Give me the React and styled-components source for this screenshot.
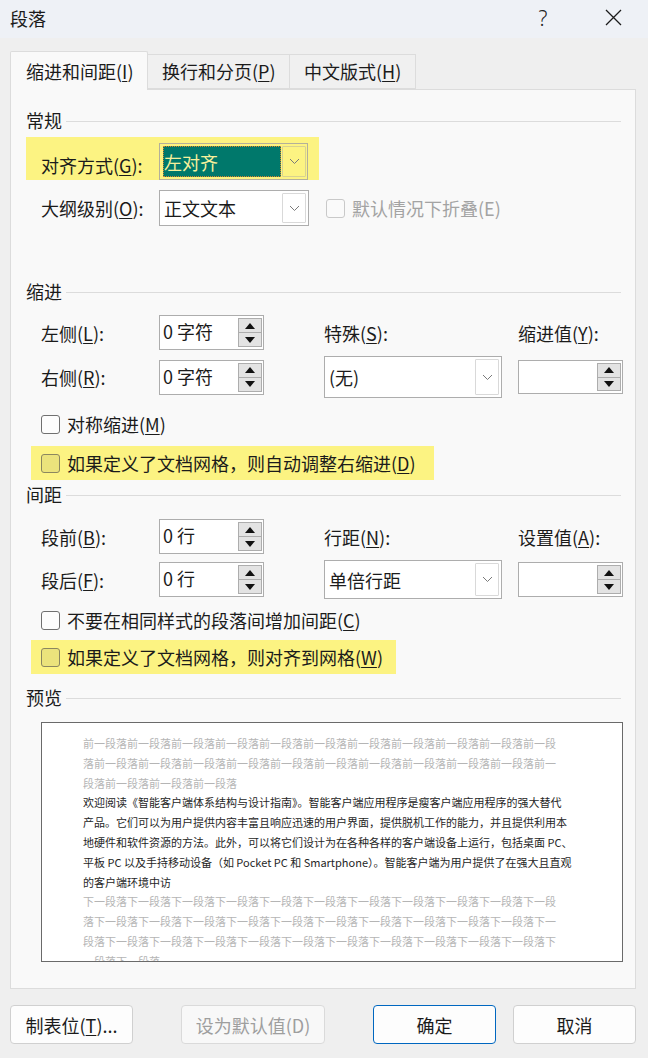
import React from 'react';
import styled, { createGlobalStyle, css } from 'styled-components';

const GlobalStyle = createGlobalStyle`
  html, body { margin: 0; padding: 0; }
  body {
    background: #efefef;
    font-family: "Noto Sans CJK SC", "Noto Sans", sans-serif;
    color: #1b1b1b;
  }
  * { box-sizing: border-box; }
  u { text-decoration-thickness: 1px; text-underline-offset: 2px; }
`;

const HL = '#fcf382';

const Window = styled.div`
  width: 648px;
  height: 1058px;
  background: #efefef;
  display: flex;
  flex-direction: column;
  overflow: hidden;
`;

const TitleBar = styled.div`
  height: 38px;
  background: #eef1f6;
  display: flex;
  align-items: center;
  padding: 0 12px 3px 10px;
  font-size: 18px;
  line-height: 24px;
`;

const TitleText = styled.div`
  flex: 1;
`;

const TitleButton = styled.div`
  width: 46px;
  height: 30px;
  display: flex;
  align-items: center;
  justify-content: center;
  font-family: "Noto Sans", sans-serif;
  font-weight: 300;
  font-size: 21px;
  color: #222;
  margin-left: ${p => p.$gap || 0}px;
`;

const TabRow = styled.div`
  display: flex;
  align-items: flex-end;
  margin-top: 13px;
  padding-left: 10px;
  position: relative;
  z-index: 2;
`;

const Tab = styled.div`
  width: ${p => p.$w}px;
  height: ${p => (p.$active ? 39 : 35)}px;
  margin-bottom: ${p => (p.$active ? -1 : 0)}px;
  background: ${p => (p.$active ? '#f9f9f9' : '#f0f0f0')};
  border: 1px solid #dcdcdc;
  border-bottom: ${p => (p.$active ? 'none' : '1px solid #dcdcdc')};
  border-left: ${p => (p.$first ? '1px solid #dcdcdc' : 'none')};
  border-radius: ${p => (p.$active ? '2px 2px 0 0' : '0')};
  font-size: 18px;
  line-height: 24px;
  display: flex;
  align-items: center;
  padding-left: ${p => (p.$active ? 15 : 14)}px;
  padding-bottom: ${p => (p.$active ? 0 : 1)}px;
  color: #1b1b1b;
`;

const Panel = styled.div`
  margin: 0 12px 0 10px;
  height: 900px;
  background: #f9f9f9;
  border: 1px solid #dcdcdc;
  display: flex;
  flex-direction: column;
  padding: 0 14px 0 15px;
`;

const SectionHeader = styled.div`
  display: flex;
  align-items: center;
  height: 24px;
  font-size: 18px;
  line-height: 24px;
  margin-top: ${p => p.$mt}px;
  &::after {
    content: '';
    flex: 1;
    height: 1px;
    background: #dcdcdc;
    margin-left: 4px;
    margin-top: 2px;
  }
`;

const Highlight = styled.div`
  align-self: flex-start;
  display: flex;
  align-items: ${p => p.$align || 'center'};
  background: ${HL};
  width: ${p => p.$w}px;
  height: ${p => p.$h}px;
  margin-top: ${p => p.$mt}px;
  margin-left: ${p => p.$ml || 0}px;
  padding: ${p => p.$pad};
`;

const FieldRow = styled.div`
  display: flex;
  align-items: center;
  margin-top: ${p => p.$mt}px;
  padding-left: 15px;
`;

const Label = styled.div`
  width: ${p => p.$w || 118}px;
  font-size: 18px;
  line-height: 24px;
  white-space: nowrap;
  color: ${p => (p.$disabled ? '#a3a3a3' : '#1b1b1b')};
`;

const HighlightLabel = styled(Label)`
  align-self: center;
  margin-top: 6px;
`;

const SelectBox = styled.div`
  width: ${p => p.$w}px;
  height: ${p => p.$h}px;
  border: 1px solid ${p => (p.$tinted ? '#b3b09a' : '#adadad')};
  background: ${p => (p.$tinted ? HL : '#ffffff')};
  display: flex;
  align-items: stretch;
  padding: 2px 1px 2px 3px;
`;

const SelectValue = styled.div`
  flex: 1;
  display: flex;
  align-items: center;
  font-size: 18px;
  line-height: 24px;
  padding-left: 1px;
  white-space: nowrap;
  ${p =>
    p.$selected &&
    css`
      background: #00786b;
      color: #f6f09c;
      outline: 1px dotted #d3842e;
      outline-offset: -1px;
      margin-right: 1px;
    `}
`;

const SelectButton = styled.div`
  width: 24px;
  border: 1px solid ${p => (p.$tinted ? '#d8d290' : '#d9d9d9')};
  border-radius: 1px;
  display: flex;
  align-items: center;
  justify-content: center;
  margin-right: ${p => (p.$tinted ? 0 : 1)}px;
`;

const Spinner = styled.div`
  width: 105px;
  height: ${p => p.$h || 35}px;
  border: 1px solid #adadad;
  background: #fff;
  display: flex;
  align-items: stretch;
  padding: 2px 1px 2px 0;
`;

const SpinValue = styled.div`
  flex: 1;
  font-size: 18px;
  line-height: 24px;
  padding: 1px 0 0 3px;
  white-space: nowrap;
`;

const SpinButtons = styled.div`
  width: 24px;
  display: flex;
  flex-direction: column;
`;

const SpinButton = styled.div`
  flex: 1;
  background: #e3e3e3;
  border: 1px solid #adadad;
  border-top: ${p => (p.$down ? 'none' : '1px solid #adadad')};
  display: flex;
  align-items: center;
  justify-content: center;
`;

const Grid = styled.div`
  display: grid;
  grid-template-columns: 118px 105px 60px 178px 16px 105px;
  grid-template-rows: 35px ${p => p.$h2}px;
  row-gap: 6px;
  align-items: center;
  margin-top: ${p => p.$mt}px;
  padding-left: 15px;
`;

const CheckRow = styled.div`
  display: flex;
  align-items: center;
  height: 26px;
  margin-top: ${p => p.$mt || 0}px;
  margin-left: ${p => p.$ml || 0}px;
`;

const Box = styled.div`
  width: 19px;
  height: 19px;
  border-radius: 3px;
  flex: none;
  border: 1px solid ${p => (p.$disabled ? '#c9c9c9' : p.$tinted ? '#8b875f' : '#707070')};
  background: ${p => (p.$disabled ? '#fafafa' : p.$tinted ? '#ebe37c' : '#fdfdfd')};
`;

const CheckText = styled.div`
  margin-left: 7px;
  font-size: 18px;
  line-height: 24px;
  white-space: nowrap;
  color: ${p => (p.$disabled ? '#a3a3a3' : '#1b1b1b')};
`;

const Preview = styled.div`
  margin: 13px 0 0 15px;
  width: 582px;
  height: 240px;
  border: 1px solid #6a6a6a;
  background: #ffffff;
  padding: 11px 0 0 41px;
  overflow: hidden;
`;

const PreviewLine = styled.div`
  font-size: 11px;
  line-height: 19.8px;
  height: 19.8px;
  white-space: nowrap;
  color: ${p => (p.$muted ? '#b5b5b5' : '#262626')};
`;

const ButtonRow = styled.div`
  display: flex;
  margin-top: 16px;
  padding-left: 10px;
`;

const Button = styled.div`
  width: ${p => p.$w || 123}px;
  height: 39px;
  margin-left: ${p => p.$ml || 0}px;
  border: 1px solid ${p => (p.$primary ? '#0067c0' : p.$disabled ? '#dadada' : '#d0d0d0')};
  border-radius: 4px;
  background: ${p => (p.$disabled ? '#f8f8f8' : '#fdfdfd')};
  color: ${p => (p.$disabled ? '#9e9e9e' : '#1b1b1b')};
  font-size: 18px;
  line-height: 24px;
  display: flex;
  align-items: center;
  justify-content: center;
`;

const Chevron = () => (
  <svg width="11" height="7" viewBox="0 0 11 7">
    <polyline points="1,1 5.5,5.5 10,1" fill="none" stroke="#7a7a7a" strokeWidth="1" />
  </svg>
);

const Tri = ({ down }) => (
  <svg width="10" height="6" viewBox="0 0 10 6">
    {down ? <polygon points="0,0 10,0 5,6" fill="#111" /> : <polygon points="0,6 10,6 5,0" fill="#111" />}
  </svg>
);

const CloseIcon = () => (
  <svg width="17" height="17" viewBox="0 0 17 17">
    <path d="M1 1 L16 16 M16 1 L1 16" stroke="#1b1b1b" strokeWidth="1.3" fill="none" />
  </svg>
);

const Select = ({ w, h, value, selected, tinted }) => (
  <SelectBox $w={w} $h={h} $tinted={tinted}>
    <SelectValue $selected={selected}>{value}</SelectValue>
    <SelectButton $tinted={tinted}>
      <Chevron />
    </SelectButton>
  </SelectBox>
);

const Spin = ({ value, h }) => (
  <Spinner $h={h}>
    <SpinValue>{value}</SpinValue>
    <SpinButtons>
      <SpinButton>
        <Tri />
      </SpinButton>
      <SpinButton $down>
        <Tri down />
      </SpinButton>
    </SpinButtons>
  </Spinner>
);

const prev1 = '前一段落'.repeat(10) + '前一段';
const prev2 = '落' + '前一段落'.repeat(10) + '前一';
const prev3 = '段落' + '前一段落'.repeat(3);
const next1 = '下一段落'.repeat(10) + '下一段';
const next2 = '落' + '下一段落'.repeat(10) + '下一';
const next3 = '段落' + '下一段落'.repeat(10) + '下';
const next4 = '一段落下一段落';

const bodyLines = [
  '欢迎阅读《智能客户端体系结构与设计指南》。智能客户端应用程序是瘦客户端应用程序的强大替代',
  '产品。它们可以为用户提供内容丰富且响应迅速的用户界面，提供脱机工作的能力，并且提供利用本',
  '地硬件和软件资源的方法。此外，可以将它们设计为在各种各样的客户端设备上运行，包括桌面 PC、',
  '平板 PC 以及手持移动设备（如 Pocket PC 和 Smartphone）。智能客户端为用户提供了在强大且直观',
  '的客户端环境中访',
];

export default function App() {
  return (
    <>
      <GlobalStyle />
      <Window>
        <TitleBar>
          <TitleText>段落</TitleText>
          <TitleButton>?</TitleButton>
          <TitleButton $gap={24}>
            <CloseIcon />
          </TitleButton>
        </TitleBar>

        <TabRow>
          <Tab $w={138} $active $first>
            缩进和间距(<u>I</u>)
          </Tab>
          <Tab $w={142}>
            换行和分页(<u>P</u>)
          </Tab>
          <Tab $w={126}>
            中文版式(<u>H</u>)
          </Tab>
        </TabRow>

        <Panel>
          <SectionHeader $mt={18}>常规</SectionHeader>
          <Highlight $w={293} $h={43} $mt={5} $pad="6px 0 0 15px" $align="flex-start">
            <HighlightLabel>
              对齐方式(<u>G</u>):
            </HighlightLabel>
            <Select w={149} h={37} value="左对齐" selected tinted />
          </Highlight>
          <FieldRow $mt={10}>
            <Label>
              大纲级别(<u>O</u>):
            </Label>
            <Select w={150} h={36} value="正文文本" />
            <CheckRow $ml={17}>
              <Box $disabled />
              <CheckText $disabled>默认情况下折叠(E)</CheckText>
            </CheckRow>
          </FieldRow>

          <SectionHeader $mt={53}>缩进</SectionHeader>
          <Grid $mt={12} $h2={42}>
            <Label>
              左侧(<u>L</u>):
            </Label>
            <Spin value="0 字符" />
            <span />
            <Label>
              特殊(<u>S</u>):
            </Label>
            <span />
            <Label>
              缩进值(<u>Y</u>):
            </Label>
            <Label>
              右侧(<u>R</u>):
            </Label>
            <Spin value="0 字符" h={35} />
            <span />
            <Select w={178} h={42} value="(无)" />
            <span />
            <Spin value="" h={34} />
          </Grid>

          <CheckRow $mt={13} $ml={15}>
            <Box />
            <CheckText>
              对称缩进(<u>M</u>)
            </CheckText>
          </CheckRow>
          <Highlight $w={403} $h={34} $mt={9} $ml={5} $pad="0 0 0 10px">
            <Box $tinted />
            <CheckText>
              如果定义了文档网格，则自动调整右缩进(<u>D</u>)
            </CheckText>
          </Highlight>

          <SectionHeader $mt={2}>间距</SectionHeader>
          <Grid $mt={13} $h2={39}>
            <Label>
              段前(<u>B</u>):
            </Label>
            <Spin value="0 行" />
            <span />
            <Label>
              行距(<u>N</u>):
            </Label>
            <span />
            <Label>
              设置值(<u>A</u>):
            </Label>
            <Label>
              段后(<u>F</u>):
            </Label>
            <Spin value="0 行" h={35} />
            <span />
            <Select w={178} h={39} value="单倍行距" />
            <span />
            <Spin value="" h={35} />
          </Grid>

          <CheckRow $mt={8} $ml={15}>
            <Box />
            <CheckText>
              不要在相同样式的段落间增加间距(<u>C</u>)
            </CheckText>
          </CheckRow>
          <Highlight $w={365} $h={34} $mt={7} $ml={5} $pad="0 0 0 10px">
            <Box $tinted />
            <CheckText>
              如果定义了文档网格，则对齐到网格(<u>W</u>)
            </CheckText>
          </Highlight>

          <SectionHeader $mt={11}>预览</SectionHeader>
          <Preview>
            <PreviewLine $muted>{prev1}</PreviewLine>
            <PreviewLine $muted>{prev2}</PreviewLine>
            <PreviewLine $muted>{prev3}</PreviewLine>
            {bodyLines.map((l, i) => (
              <PreviewLine key={i}>{l}</PreviewLine>
            ))}
            <PreviewLine $muted>{next1}</PreviewLine>
            <PreviewLine $muted>{next2}</PreviewLine>
            <PreviewLine $muted>{next3}</PreviewLine>
            <PreviewLine $muted>{next4}</PreviewLine>
          </Preview>
        </Panel>

        <ButtonRow>
          <Button>
            制表位(<u>T</u>)...
          </Button>
          <Button $w={144} $ml={48} $disabled>
            设为默认值(D)
          </Button>
          <Button $ml={48} $primary>
            确定
          </Button>
          <Button $ml={17}>取消</Button>
        </ButtonRow>
      </Window>
    </>
  );
}
